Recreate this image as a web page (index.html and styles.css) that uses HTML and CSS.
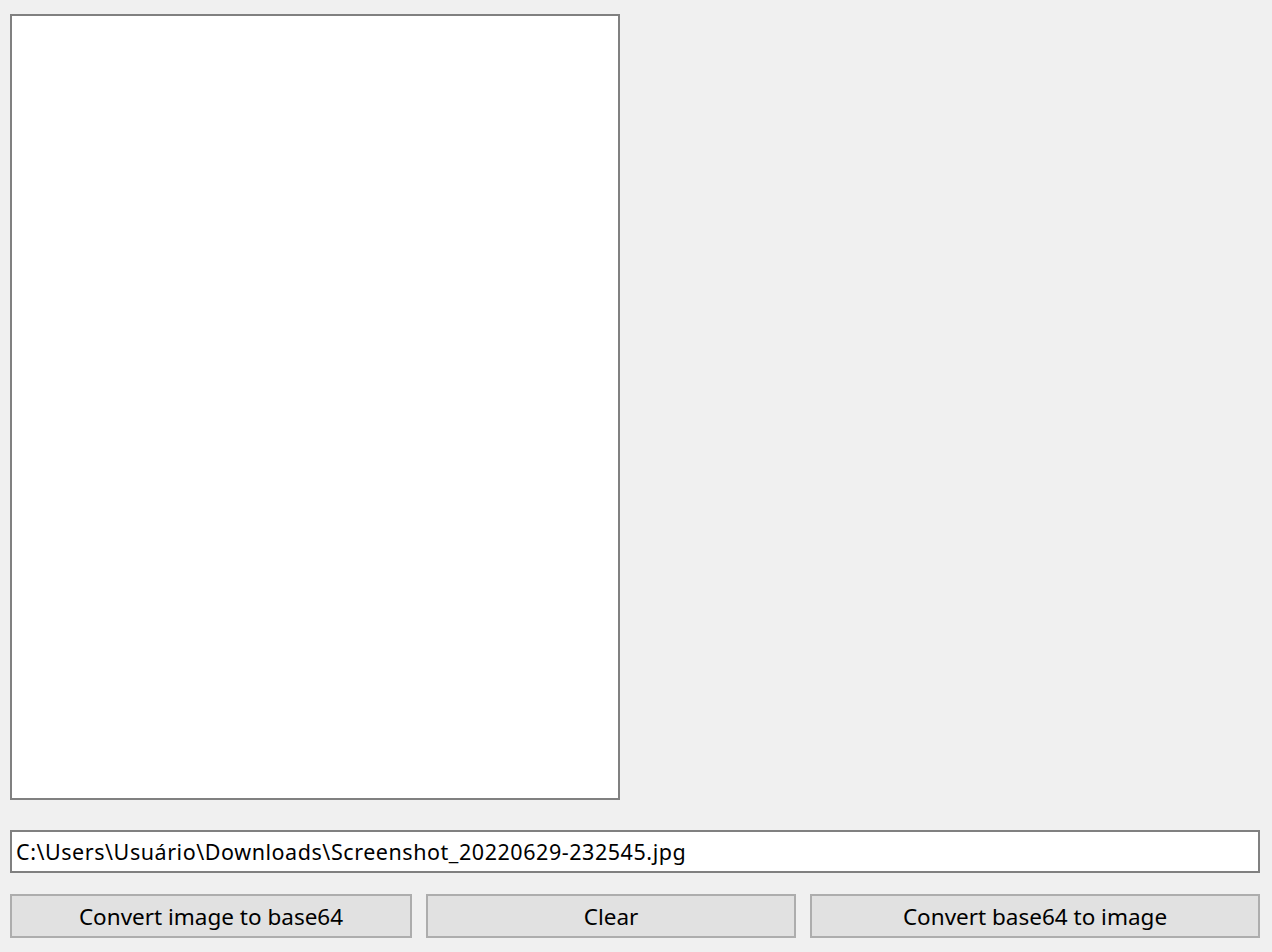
FILE: index.html
```html
<!DOCTYPE html>
<html>
<head>
<meta charset="utf-8">
<link rel="stylesheet" href="styles.css">
</head>
<body>
<div class="window">
  <div class="picture"></div>
  <div class="path-field">C:\Users\Usuário\Downloads\Screenshot_20220629-232545.jpg</div>
  <div class="actions">
    <button class="btn btn-to64">Convert image to base64</button>
    <button class="btn btn-clear">Clear</button>
    <button class="btn btn-from64">Convert base64 to image</button>
  </div>
</div>
</body>
</html>
```

FILE: styles.css
```css
html, body {
  margin: 0;
  padding: 0;
  background: #f0f0f0;
}
body {
  width: 1272px;
  height: 952px;
  overflow: hidden;
  font-family: "Noto Sans", "Open Sans", sans-serif;
  color: #000;
}
.window {
  display: flex;
  flex-direction: column;
  padding: 14px 12px 0 10px;
}
.picture {
  box-sizing: border-box;
  width: 610px;
  height: 786px;
  background: #fff;
  border: 2px solid #808080;
}
.path-field {
  box-sizing: border-box;
  margin-top: 30px;
  width: 1250px;
  height: 43px;
  background: #fff;
  border: 2px solid #808080;
  padding: 0 0 0 4px;
  display: flex;
  align-items: center;
  font-size: 21.5px;
  letter-spacing: 0.55px;
  white-space: nowrap;
}
.actions {
  display: flex;
  gap: 14px;
  margin-top: 21px;
}
.btn {
  box-sizing: border-box;
  height: 44px;
  background: #e1e1e1;
  border: 2px solid #adadad;
  font-family: inherit;
  font-size: 22.5px;
  color: #000;
  padding: 0;
  display: flex;
  align-items: center;
  justify-content: center;
}
.btn-to64 { width: 402px; }
.btn-clear { width: 370px; }
.btn-from64 { width: 450px; }
```
